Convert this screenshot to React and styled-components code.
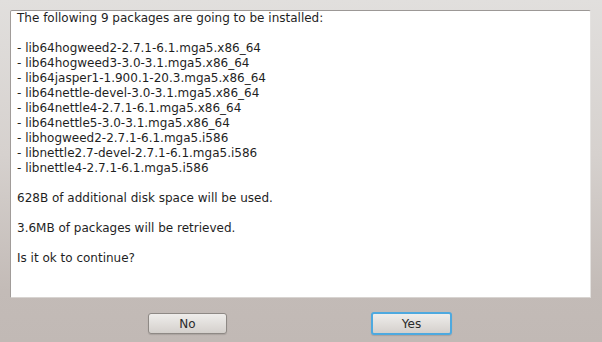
import styled, { createGlobalStyle } from 'styled-components';

const GlobalStyle = createGlobalStyle`
    html, body {
        margin: 0;
        padding: 0;
    }
    body {
        font-family: "DejaVu Sans", sans-serif;
        font-size: 12px;
        color: #1f1f1f;
    }
`;

// ############## Window ##################
const Window = styled.div`
    width: 602px;
    height: 342px;
    box-sizing: border-box;
    padding: 10px 11px 0 10px;
    display: flex;
    flex-direction: column;
    background: linear-gradient(to bottom, #e1dfdd 0%, #d6d1ce 45%, #c3bbb7 85%, #c1b9b5 100%);
`;

const MessageBox = styled.div`
    height: 288px;
    box-sizing: border-box;
    background-color: #fff;
    border-top: 1px solid #9c9896;
    border-left: 1px solid #a19c99;
    border-right: 1px solid #e4e2e0;
    border-bottom: 1px solid #d8d4d1;
    border-radius: 2px 2px 0 0;
    padding: 0 6px;
    line-height: 15px;
    white-space: pre;
`;

const Line = styled.div`
    min-height: 15px;
`;

const ButtonRow = styled.div`
    display: flex;
    justify-content: space-between;
    padding: 15px 139px 0 138px;
`;

const Button = styled.button`
    width: ${({ $focused }) => ($focused ? '81px' : '79px')};
    height: ${({ $focused }) => ($focused ? '23px' : '21px')};
    margin-top: ${({ $focused }) => ($focused ? '-1px' : '0')};
    box-sizing: border-box;
    font-family: "DejaVu Sans", sans-serif;
    font-size: 12px;
    color: #2a2a2a;
    padding: 0;
    background: linear-gradient(to bottom, #efedeb, #d4d0cc);
    border: ${({ $focused }) => ($focused ? '2px solid #4ea9df' : '1px solid #8e8985')};
    border-radius: 3px;
    box-shadow: 0 1px 1px rgba(0, 0, 0, 0.12);
`;
// ############## End Window ##################

const lines = [
    'The following 9 packages are going to be installed:',
    '',
    '- lib64hogweed2-2.7.1-6.1.mga5.x86_64',
    '- lib64hogweed3-3.0-3.1.mga5.x86_64',
    '- lib64jasper1-1.900.1-20.3.mga5.x86_64',
    '- lib64nettle-devel-3.0-3.1.mga5.x86_64',
    '- lib64nettle4-2.7.1-6.1.mga5.x86_64',
    '- lib64nettle5-3.0-3.1.mga5.x86_64',
    '- libhogweed2-2.7.1-6.1.mga5.i586',
    '- libnettle2.7-devel-2.7.1-6.1.mga5.i586',
    '- libnettle4-2.7.1-6.1.mga5.i586',
    '',
    '628B of additional disk space will be used.',
    '',
    '3.6MB of packages will be retrieved.',
    '',
    'Is it ok to continue?',
];

export default function App() {
    return (
        <>
            <GlobalStyle />
            <Window>
                <MessageBox>
                    {lines.map((text, i) => (
                        <Line key={i}>{text}</Line>
                    ))}
                </MessageBox>
                <ButtonRow>
                    <Button>No</Button>
                    <Button $focused>Yes</Button>
                </ButtonRow>
            </Window>
        </>
    );
}
